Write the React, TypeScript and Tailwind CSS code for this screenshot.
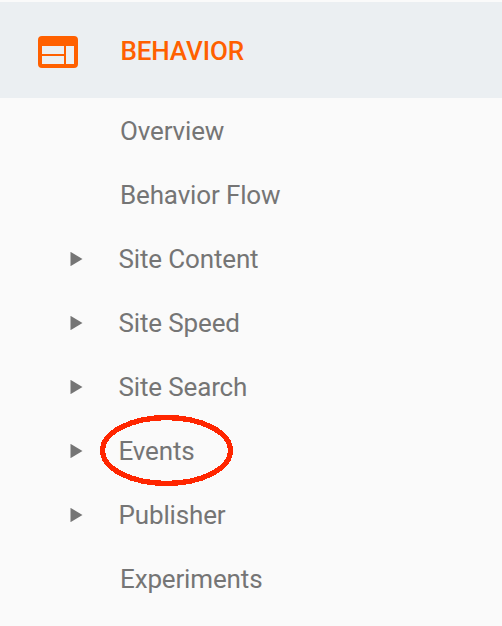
import React from 'react';

interface NavItem {
  label: string;
  expandable?: boolean;
  circled?: boolean;
}

const items: NavItem[] = [
  { label: 'Overview' },
  { label: 'Behavior Flow' },
  { label: 'Site Content', expandable: true },
  { label: 'Site Speed', expandable: true },
  { label: 'Site Search', expandable: true },
  { label: 'Events', expandable: true, circled: true },
  { label: 'Publisher', expandable: true },
  { label: 'Experiments' },
];

const BehaviorIcon = () => (
  <svg width="40" height="32" viewBox="0 0 40 32" className="shrink-0">
    <path
      fill="#ff6000"
      fillRule="evenodd"
      d="M4 0H36a4 4 0 0 1 4 4V28a4 4 0 0 1-4 4H4a4 4 0 0 1-4-4V4a4 4 0 0 1 4-4ZM4 10V18H26V10ZM4 20V28H26V20ZM28 10V28H36V10Z"
    />
  </svg>
);

export default function App() {
  return (
    <nav className="h-[626px] w-[502px] overflow-hidden bg-[#fafafa] font-['Roboto',sans-serif]">
      {/* Section header */}
      <div className="h-0.5 bg-[#fafafa]" />
      <div className="flex h-24 items-center bg-[#ebeff2] pl-[38px] pt-1">
        <BehaviorIcon />
        <span className="ml-[42.4px] pb-0.5 text-[26px] font-medium leading-none tracking-[-0.1px] text-[#ff6000]">BEHAVIOR</span>
      </div>

      {/* Reports */}
      <ul className="pt-px">
        {items.map(item => (
          <li key={item.label} className="relative flex h-16 items-center text-[26px] tracking-[-0.15px] text-[#757575]">
            <span className="flex w-[118.5px] shrink-0 pl-[70px]">
              {item.expandable && (
                <svg width="13" height="14" viewBox="0 0 13 14">
                  <path d="M0.5 -0.2L12.5 7L0.5 14.2Z" fill="#757575" />
                </svg>
              )}
            </span>
            <span className={item.expandable ? '' : 'pl-[1.5px]'}>{item.label}</span>
            {item.circled && (
              <svg className="absolute left-[98px] top-[-5px]" width="138" height="76" viewBox="0 0 138 76">
                <ellipse cx="68.5" cy="36.5" rx="63.9" ry="32.9" fill="none" stroke="#ff2600" strokeWidth="5.3" shapeRendering="crispEdges" />
              </svg>
            )}
          </li>
        ))}
      </ul>
    </nav>
  );
}
